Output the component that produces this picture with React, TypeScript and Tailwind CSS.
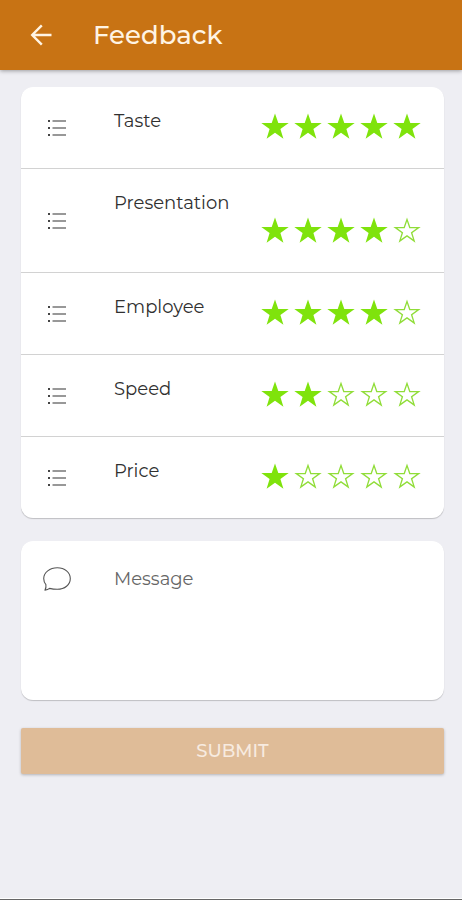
import { useState } from "react";

const STAR = "M14 0.4 L17.3 9.9 H27.7 L19.4 15.9 L22.4 25.7 L14 19.8 L5.6 25.7 L8.6 15.9 L0.3 9.9 H10.7 Z";
const STAR_HOLE = "M14 4.6 L16.3 11.2 H23.6 L17.8 15.4 L20 22.3 L14 18.1 L8 22.3 L10.2 15.4 L4.4 11.2 H11.7 Z";

function Star({ filled }: { filled: boolean }) {
  return (
    <svg viewBox="0 0 28 26" className="h-[26px] w-7" fill={filled ? "#7fe30c" : "#90dd38"} fillRule="evenodd" aria-hidden="true">
      <path d={filled ? STAR : `${STAR} ${STAR_HOLE}`} />
    </svg>
  );
}

function ListIcon() {
  return (
    <svg viewBox="0 0 20 18" className="h-[18px] w-5" aria-hidden="true">
      <g fill="#444">
        <rect x="1" y="1" width="2" height="2" />
        <rect x="1" y="8" width="2" height="2" />
        <rect x="1" y="15" width="2" height="2" />
      </g>
      <path d="M5.5 2H19M5.5 9H19M5.5 16H19" stroke="#777" strokeWidth="1.4" />
    </svg>
  );
}

function ChatIcon() {
  return (
    <svg viewBox="0 0 28 24" className="h-6 w-7" fill="none" stroke="#555" strokeWidth="1.1" strokeLinejoin="round" aria-hidden="true">
      <path d="M14.3 0.8 C21.7 0.8 27.3 5.4 27.3 11.5 C27.3 17.8 21.7 22.3 14.3 22.3 C11.4 22.3 9 22 6.6 21.4 C5.4 22.4 3.9 23 2 23.1 C2.9 21.5 3.2 19.6 2.9 17.6 C1.4 15.8 0.7 13.8 0.7 11.5 C0.7 5.4 6.9 0.8 14.3 0.8 Z" />
    </svg>
  );
}

type RowProps = { name: string; value: number; onChange: (value: number) => void };

function RatingRow({ name, value, onChange }: RowProps) {
  return (
    <li className="flex border-b border-[#d2d2d2] last:border-b-0">
      <div className="flex w-[93px] shrink-0 items-center pl-[26px]">
        <ListIcon />
      </div>
      <div
        role="radiogroup"
        aria-label={name}
        className="flex flex-1 flex-wrap justify-between gap-x-9 pt-[23px] pr-[23px] pb-[29px]"
      >
        <span className="text-lg leading-[22px]">{name}</span>
        <div className="mt-[3px] ml-auto flex gap-[5px]">
          {[1, 2, 3, 4, 5].map((n) => (
            <label key={n} className="relative cursor-pointer">
              <input
                type="radio"
                name={name}
                checked={value === n}
                onChange={() => onChange(n)}
                aria-label={`${n} of 5`}
                className="sr-only"
              />
              <Star filled={n <= value} />
            </label>
          ))}
        </div>
      </div>
    </li>
  );
}

export default function App() {
  const [ratings, setRatings] = useState([
    { name: "Taste", value: 5 },
    { name: "Presentation", value: 4 },
    { name: "Employee", value: 4 },
    { name: "Speed", value: 2 },
    { name: "Price", value: 1 },
  ]);

  return (
    <div className="flex min-h-screen flex-col border-b border-[#666] bg-[#eeeef3] font-['Montserrat',Inter,sans-serif] text-[#303030]">
      <header className="flex h-[70px] items-center bg-[#c87314] pl-[30px] text-[#fff4e4] shadow-[0_1px_4px_rgba(0,0,0,0.35)]">
        <button type="button" aria-label="Back" className="w-[63px] cursor-pointer">
          <svg viewBox="0 0 22 22" className="size-[22px]" fill="none" stroke="currentColor" strokeWidth="2.4" aria-hidden="true">
            <path d="M11.8 1.3 L2.2 11 L11.8 20.7 M2.2 11 H21.5" />
          </svg>
        </button>
        <h1 className="text-[26px] font-medium">Feedback</h1>
      </header>

      <form className="flex flex-1 flex-col px-[18px] pt-[17px] pl-[21px]" onSubmit={(e) => e.preventDefault()}>
        <ul className="rounded-xl bg-white shadow-[0_1px_1px_rgba(0,0,0,0.2)]">
          {ratings.map((r) => (
            <RatingRow
              key={r.name}
              name={r.name}
              value={r.value}
              onChange={(value) => setRatings(ratings.map((x) => (x.name === r.name ? { ...x, value } : x)))}
            />
          ))}
        </ul>

        <div className="mt-[23px] flex rounded-xl bg-white pt-[26px] pb-[13px] shadow-[0_1px_1px_rgba(0,0,0,0.2)]">
          <label htmlFor="message" aria-label="Message" className="w-[93px] shrink-0 pl-[22px]">
            <ChatIcon />
          </label>
          <textarea
            id="message"
            rows={5}
            placeholder="Message"
            className="min-w-0 flex-1 resize-none pr-[23px] text-lg leading-6 outline-none placeholder:text-[#666]"
          />
        </div>

        <button
          type="submit"
          className="mt-7 h-[46px] cursor-pointer rounded-xs bg-[#dfbc98] text-lg font-medium text-[#f7ebe0] shadow-[0_1px_3px_rgba(0,0,0,0.25)]"
        >
          SUBMIT
        </button>
      </form>
      <div className="h-px bg-white" />
    </div>
  );
}
